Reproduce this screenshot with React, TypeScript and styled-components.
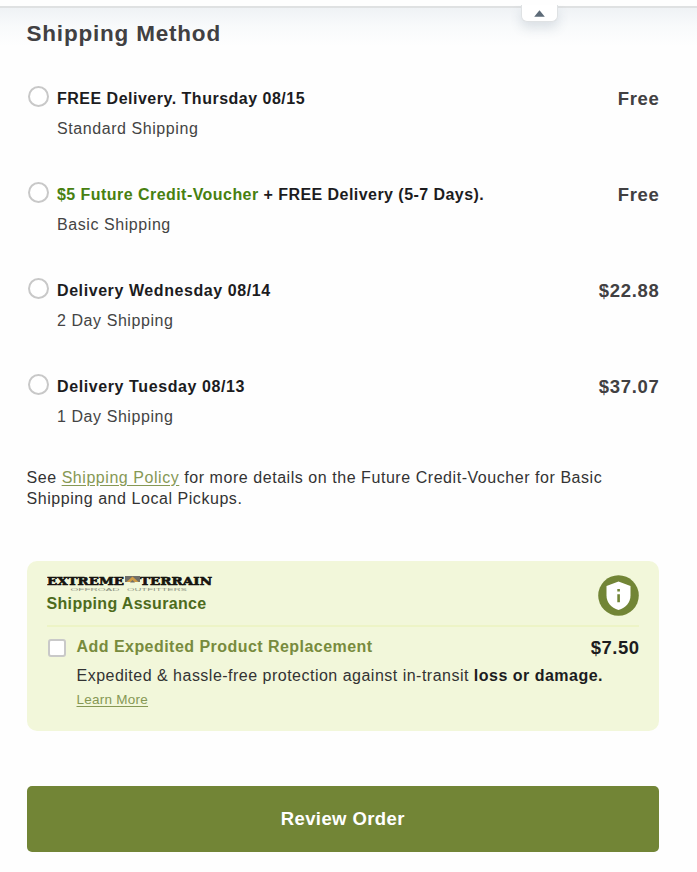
import React, { useState } from "react";
import styled, { createGlobalStyle } from "styled-components";

const GlobalStyle = createGlobalStyle`
	* {
		box-sizing: border-box;
	}
	body {
		margin: 0;
		background-color: #fefefe;
		font-family: "Liberation Sans", Arial, sans-serif;
		color: #333;
	}
`;

const Page = styled.div`
	position: relative;
	height: 872px;
	overflow: hidden;
	padding-top: 6px;
`;
const TopShade = styled.div`
	height: 40px;
	margin-bottom: -40px;
	border-top: 2px solid #dfe1e2;
	background: linear-gradient(#eff2f5, #f8fafb 45%, #fefefe);
`;
const CollapseTab = styled.button`
	position: absolute;
	top: 5px;
	left: 521px;
	width: 37px;
	height: 17px;
	padding: 0;
	display: flex;
	justify-content: center;
	align-items: center;
	background-color: white;
	border: 1.5px solid #dfe2e4;
	border-top: none;
	border-radius: 0 0 6px 6px;
	box-shadow: 0 6px 12px rgba(70, 95, 120, 0.16);
	clip-path: inset(0 -30px -30px -30px);
`;
const Content = styled.main`
	position: relative;
	width: 632.5px;
	margin-left: 26.5px;
	padding-top: 14px;
`;
const Title = styled.h1`
	margin: 0 0 35px;
	font-size: 22.5px;
	line-height: 28px;
	letter-spacing: 0.8px;
	color: #414042;
`;
const Options = styled.div`
	display: flex;
	flex-direction: column;
	gap: 36.2px;
`;
const Option = styled.label`
	display: flex;
	height: 60px;
	line-height: 30px;
`;
const Radio = styled.input`
	appearance: none;
	flex: none;
	width: 21px;
	height: 21px;
	margin: 2.5px 8px 0 1.5px;
	border: 2px solid #c8c8c8;
	border-radius: 50%;
	background-color: white;
	&:checked {
		border: 6px solid #728536;
	}
`;
const OptionText = styled.div`
	flex: 1;
	padding-top: 0.5px;
	font-size: 16px;
	white-space: nowrap;
`;
const OptionName = styled.div<{ $spacing: number }>`
	font-weight: bold;
	letter-spacing: ${(props) => props.$spacing}px;
	color: #1c1c1e;
`;
const Credit = styled.span`
	color: #478010;
`;
const OptionInfo = styled.div`
	letter-spacing: 0.57px;
	color: #444;
`;
const Price = styled.div<{ $dark?: boolean }>`
	margin-right: -0.6px;
	font-size: 18.5px;
	font-weight: bold;
	letter-spacing: 0.7px;
	color: ${(props) => (props.$dark ? "#1c1c1e" : "#414042")};
`;
const OptionPrice = styled(Price)`
	padding-top: 0.6px;
`;
const Policy = styled.p`
	margin: 35.4px 0 51.6px;
	font-size: 16px;
	line-height: 21px;
	letter-spacing: 0.55px;
	white-space: nowrap;
`;
const Link = styled.a<{ $small?: boolean }>`
	font-size: ${(props) => (props.$small ? "13.5px" : "inherit")};
	letter-spacing: ${(props) => (props.$small ? "0.25px" : "inherit")};
	color: #869854;
	text-decoration: underline;
	text-underline-offset: 2px;
	cursor: pointer;
`;
const Assurance = styled.section`
	height: 170px;
	padding: 13px 20px 0;
	border-radius: 10px;
	background-color: #f2f7da;
`;
const AssuranceHeader = styled.div`
	display: flex;
	justify-content: space-between;
	height: 53px;
	border-bottom: 2px solid #edf4c6;
`;
const AssuranceTitle = styled.div`
	font-size: 16px;
	font-weight: bold;
	line-height: 22px;
	letter-spacing: 0.33px;
	color: #4d6b1c;
`;
const Logo = styled.svg`
	display: block;
	margin-bottom: 1.5px;
`;
const Shield = styled.svg`
	margin-top: 1px;
`;
const AssuranceBody = styled.label`
	display: flex;
	padding-top: 5px;
`;
const Checkbox = styled.input`
	appearance: none;
	flex: none;
	width: 18px;
	height: 18px;
	margin: 7px 10.5px 0 1.5px;
	border: 2px solid #c9c9c9;
	border-radius: 3px;
	background-color: white;
	&:checked {
		background-color: #728536;
	}
`;
const AssuranceText = styled.div`
	flex: 1;
	font-size: 16px;
	line-height: 29px;
	white-space: nowrap;
`;
const AddName = styled.div`
	font-weight: bold;
	letter-spacing: 0.46px;
	color: #788b3d;
`;
const AddInfo = styled.div`
	letter-spacing: 0.49px;
	margin-right: -40px;
	b {
		color: #1c1c1e;
	}
`;
const LearnMore = styled.div`
	line-height: 17px;
`;
const AddPrice = styled(Price)`
	line-height: 32px;
	letter-spacing: 0.5px;
`;
const ReviewButton = styled.button`
	display: block;
	width: 100%;
	height: 66px;
	margin-top: 55px;
	border: none;
	border-radius: 5px;
	background-color: #728536;
	color: white;
	font-family: inherit;
	font-size: 18.5px;
	font-weight: bold;
	letter-spacing: 0.4px;
	cursor: pointer;
`;

const options = [
	{
		name: "FREE Delivery. Thursday 08/15",
		info: "Standard Shipping",
		price: "Free",
		spacing: 0.5,
	},
	{
		credit: "$5 Future Credit-Voucher",
		name: " + FREE Delivery (5-7 Days).",
		info: "Basic Shipping",
		price: "Free",
		spacing: 0.45,
	},
	{
		name: "Delivery Wednesday 08/14",
		info: "2 Day Shipping",
		price: "$22.88",
		spacing: 0.58,
	},
	{
		name: "Delivery Tuesday 08/13",
		info: "1 Day Shipping",
		price: "$37.07",
		spacing: 0.6,
	},
];

const BrandLogo = () => (
	<Logo width="168" height="18" viewBox="0 0 168 18">
		<g
			fontFamily="DejaVu Serif, serif"
			fontWeight="bold"
			fontSize="11"
			fill="#17140f"
			stroke="#17140f"
			strokeWidth="0.6">
			<text x="0" y="10.5" textLength="77" lengthAdjust="spacingAndGlyphs">
				EXTREME
			</text>
			<text x="93" y="10.5" textLength="72" lengthAdjust="spacingAndGlyphs">
				TERRAIN
			</text>
		</g>
		<path d="M78 2h15v6H78z" fill="#6f6e68" />
		<path d="M79.5 8l6-5.5 6 5.5z" fill="#d09b45" />
		<path d="M83 8.5l2.5-2.5 2.5 2.5z" fill="#6f6e68" />
		<g fontFamily="Liberation Sans, sans-serif" fontSize="4" fill="#8f9484">
			<text x="23.5" y="17" textLength="49" lengthAdjust="spacingAndGlyphs">
				OFFROAD
			</text>
			<text x="80" y="17" textLength="60" lengthAdjust="spacingAndGlyphs">
				OUTFITTERS
			</text>
		</g>
	</Logo>
);

const App = () => {
	const [selected, setSelected] = useState(-1);

	return (
		<Page>
			<GlobalStyle />
			<TopShade />
			<CollapseTab>
				<svg width="11" height="7" viewBox="0 0 11 7">
					<path d="M5.5 0.2L10.8 6.8H0.2z" fill="#5d6b78" />
				</svg>
			</CollapseTab>
			<Content>
				<Title>Shipping Method</Title>
				<Options>
					{options.map((option, i) => (
						<Option key={option.info}>
							<Radio
								type="radio"
								name="shipping"
								checked={selected === i}
								onChange={() => setSelected(i)}
							/>
							<OptionText>
								<OptionName $spacing={option.spacing}>
									{option.credit && <Credit>{option.credit}</Credit>}
									{option.name}
								</OptionName>
								<OptionInfo>{option.info}</OptionInfo>
							</OptionText>
							<OptionPrice>{option.price}</OptionPrice>
						</Option>
					))}
				</Options>
				<Policy>
					See <Link>Shipping Policy</Link> for more details on the Future
					Credit-Voucher for Basic
					<br />
					Shipping and Local Pickups.
				</Policy>
				<Assurance>
					<AssuranceHeader>
						<div>
							<BrandLogo />
							<AssuranceTitle>Shipping Assurance</AssuranceTitle>
						</div>
						<Shield width="41" height="41" viewBox="0 0 41 41">
							<circle cx="20.5" cy="20.5" r="20.3" fill="#728536" />
							<path
								d="M20.5 6.5L32.5 11v9.5c0 7-4.5 12-12 14.5C13 32.5 8.5 27.5 8.5 20.5V11z"
								fill="white"
							/>
							<path
								d="M19.3 14h2.6v2.6h-2.6zM19.3 19.2h2.6v8h-2.6z"
								fill="#728536"
							/>
						</Shield>
					</AssuranceHeader>
					<AssuranceBody>
						<Checkbox type="checkbox" />
						<AssuranceText>
							<AddName>Add Expedited Product Replacement</AddName>
							<AddInfo>
								Expedited &amp; hassle-free protection against in-transit{" "}
								<b>loss or damage.</b>
							</AddInfo>
							<LearnMore>
								<Link $small>Learn More</Link>
							</LearnMore>
						</AssuranceText>
						<AddPrice $dark>$7.50</AddPrice>
					</AssuranceBody>
				</Assurance>
				<ReviewButton>Review Order</ReviewButton>
			</Content>
		</Page>
	);
};

export default App;
